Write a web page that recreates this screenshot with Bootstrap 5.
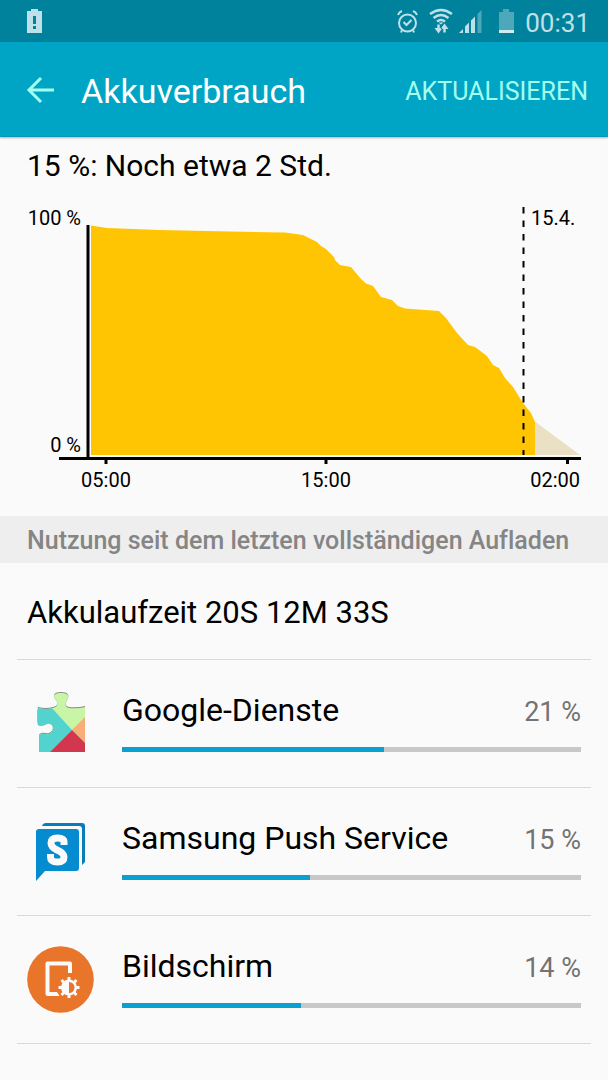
<!DOCTYPE html>
<html lang="de">
<head>
<meta charset="utf-8">
<meta name="viewport" content="width=device-width, initial-scale=1">
<title>Akkuverbrauch</title>
<link href="https://cdn.jsdelivr.net/npm/bootstrap@5.3.0/dist/css/bootstrap.min.css" rel="stylesheet">
<style>
  body { font-family: Roboto, "Liberation Sans", sans-serif; font-variant-ligatures: none; background: #fafafa; color: #000; }
  .status { background: #00829d; height: 42px; padding: 0 18px 0 27px; color: #bfe0e7; }
  .clock { font-size: 26px; line-height: 32px; margin: 3px 0 0 8px; }
  .appbar { background: #00a5c6; height: 95px; padding: 2px 20px 0 26px; border-bottom: 1px solid #0898b4; box-shadow: 0 1px 2px rgba(0,0,0,.3); }
  .back { line-height: 0; color: #a5fff0; }
  .title { font-size: 34px; line-height: 40px; margin: 2px 0 0 26px; }
  .refresh { font-size: 25px; line-height: 32px; color: #a5fff0; margin-top: 3px; }
  .remaining { font-size: 30px; line-height: 40px; padding: 9px 27px 10px; }
  .chart text { font-size: 20px; }
  .section-title { font-size: 25px; line-height: 32px; font-weight: 500; color: #858585; background: #eee; padding: 9px 27px 6px; margin-top: 16px; }
  .usage { padding: 0 17px; }
  .usage > * { border-bottom: 1px solid #d8d8d8; }
  .runtime { font-size: 31px; line-height: 40px; padding: 30px 10px 26px; }
  .usage-row { height: 128px; padding: 0 10px; }
  .app-icon { width: 67px; height: 67px; margin-right: 28px; }
  .entry { padding-bottom: 6px; }
  .app-name { font-size: 32px; line-height: 40px; }
  .share { font-size: 27px; line-height: 36px; color: #737373; }
  .meter { height: 5px; background: #c8c8c8; border-radius: 0; margin-top: 17px; }
  .meter .progress-bar { background: #0aa1d0; }
</style>
</head>
<body>
<div class="status d-flex align-items-center">
  <svg width="16" height="24" viewBox="0 0 16 24" fill="currentColor" aria-label="Akku schwach"><path fill-rule="evenodd" d="M4 0H11V2H15V24H0V2H4ZM6 7V15H9V7ZM6 17V20H9V17Z"/></svg>
  <div class="d-flex align-items-center ms-auto">
    <svg width="120" height="26" viewBox="397 8 120 26" fill="none" stroke="currentColor" aria-hidden="true">
      <circle cx="407.500" cy="23" r="8.500" stroke-width="2"/>
      <path d="M403.500 22l3 3 5-5M398 15q1-3 4-4M417 15q-1-3-4-4M402 30l-1 2.500M413 30l1 2.500" stroke-width="2"/>
      <path d="M430 14q11-8 22 0M433.500 18q7.500-6 15 0M437 21.500q4-3 8 0" stroke-width="2.500"/>
      <path d="M438.500 22.500h5l-2.500 2z" fill="currentColor" stroke="none"/>
      <path d="M438.500 24.500v5M444.500 27.500v5" stroke-width="2.500"/>
      <path d="M434.500 28h8l-4 5.500zM440.500 29h8l-4-5.500z" fill="currentColor" stroke="none"/>
      <path d="M459 33l4-4v4zM465 33V26.500l4-4V33zM471 33V20.500l4-4V33z" fill="currentColor" stroke="none"/>
      <path d="M477.500 33V14l4-4V33z" fill="#4da8ba" stroke="none"/>
      <path d="M499 12h4V9h6v3h5v18H499z" fill="#4da8ba" stroke="none"/>
      <path d="M499 30h15v3H499z" fill="#d2ebef" stroke="none"/>
    </svg>
    <span class="clock">00:31</span>
  </div>
</div>
<header class="appbar d-flex align-items-center">
  <button class="back btn p-0 border-0" type="button" aria-label="Zurück">
    <svg width="29" height="28" viewBox="0 0 29 28" fill="none" stroke="currentColor" stroke-width="3" aria-hidden="true"><path d="M28 14H3M15 2L3 14L15 26"/></svg>
  </button>
  <h1 class="title fw-normal text-white mb-0">Akkuverbrauch</h1>
  <button class="refresh btn p-0 border-0 ms-auto" type="button">AKTUALISIEREN</button>
</header>
<main>
  <div class="remaining">15 %: Noch etwa 2 Std.</div>
  <svg class="chart d-block w-100" viewBox="0 196 608 304" role="img" aria-label="Akkustand im Zeitverlauf">
    <path fill="#ffc503" d="M91 225.500L107 228L160 230L230 231.500L285 232.500L303 235L317 242L321 246L326 249L334 257L335 260L340 265L351 267L361 279L366 283.500L373 286L381 297L392 300L398 306L405 308.500L439 311L446 318L457 333L468 345L475 347L487 356L493 365L499 368L505 378L513 387L523 403L531 413L535 422V455H91Z"/>
    <path fill="#eae1c5" d="M535 421.500L580 455H535Z"/>
    <path stroke="#000" stroke-width="3" d="M88 225V458M59 458.500H581M106 459V464M326 459V464M567.500 459V464" fill="none"/>
    <path stroke="#000" stroke-width="2" stroke-dasharray="6.500 7" d="M523.500 207V455"/>
    <g text-anchor="end"><text x="81" y="225">100 %</text><text x="81" y="452">0 %</text><text x="580" y="487">02:00</text></g>
    <text x="531" y="225">15.4.</text>
    <g text-anchor="middle"><text x="106" y="487">05:00</text><text x="326" y="487">15:00</text></g>
  </svg>
  <h2 class="section-title mb-0">Nutzung seit dem letzten vollständigen Aufladen</h2>
  <div class="usage">
    <div class="runtime">Akkulaufzeit 20S 12M 33S</div>
    <div class="usage-row d-flex align-items-center">
      <svg class="app-icon flex-shrink-0" viewBox="27 690 67 67" aria-hidden="true">
        <defs><path id="piece" d="M38 707Q46 709 53 707C58 706 58 703 56 700C52 695 54 692 61 692C68 692 70 695 67 700C65 704 65 706 69 707Q77 708 85 706V752H39V735C42 731 45 734 49 733C54 731 54 725 50 724C46 723 43 728 38 725Q36 716 38 707Z"/><clipPath id="cut"><use href="#piece"/></clipPath></defs>
        <use href="#piece" fill="#858b82"/>
        <g clip-path="url(#cut)"><g transform="translate(0 1)">
          <use href="#piece" fill="#c9f5a7"/>
          <path fill="#52d3ce" d="M35 706H51L72 729L49 752H35Z" clip-path="url(#cut)"/>
          <path fill="#f9ad77" d="M86 715V743L72 729Z"/>
          <path fill="#d13850" d="M72 729L86 743V751H50Z"/>
        </g></g>
      </svg>
      <div class="entry flex-grow-1">
        <div class="d-flex justify-content-between align-items-end"><span class="app-name">Google-Dienste</span><span class="share">21 %</span></div>
        <div class="meter progress" role="progressbar" aria-label="Google-Dienste" aria-valuenow="21"><div class="progress-bar" style="width:57%"></div></div>
      </div>
    </div>
    <div class="usage-row d-flex align-items-center">
      <svg class="app-icon flex-shrink-0" viewBox="27 818 67 67" aria-hidden="true">
        <path fill="#087dbd" d="M42 826Q43 823 46 823H82Q85 823 85 826V862L82 865V829Q82 826 79 826Z"/>
        <path fill="#058bd0" d="M39 829H76Q79 829 79 832V868Q79 871 76 871H45L36 881V832Q36 829 39 829Z"/>
        <path fill="none" stroke="#fafafa" stroke-width="7" d="M64 845V842Q64 838 57.500 838Q51 838 51 843Q51 847 57 850Q64 853 64 857Q64 862 57.500 862Q50.500 862 50.500 857V854"/>
      </svg>
      <div class="entry flex-grow-1">
        <div class="d-flex justify-content-between align-items-end"><span class="app-name">Samsung Push Service</span><span class="share">15 %</span></div>
        <div class="meter progress" role="progressbar" aria-label="Samsung Push Service" aria-valuenow="15"><div class="progress-bar" style="width:41%"></div></div>
      </div>
    </div>
    <div class="usage-row d-flex align-items-center">
      <svg class="app-icon flex-shrink-0" viewBox="27 946 67 67" aria-hidden="true">
        <circle cx="60.500" cy="979.500" r="33.300" fill="#e8752a"/>
        <path fill="none" stroke="#fafafa" stroke-width="4" stroke-linejoin="round" d="M70 973V963.500H47.500V994H56.500"/>
        <path fill="#fafafa" d="M56 992H57L59.500 996H56Z"/>
        <path stroke="#fafafa" stroke-width="3" d="M69 977V998M58.500 987.500H79.500M61.500 980L76.500 995M76.500 980L61.500 995"/>
        <circle cx="69" cy="987.500" r="8" fill="#fafafa"/>
        <path fill="#e8752a" d="M69 982A5.500 5.500 0 0 1 69 993Z"/>
      </svg>
      <div class="entry flex-grow-1">
        <div class="d-flex justify-content-between align-items-end"><span class="app-name">Bildschirm</span><span class="share">14 %</span></div>
        <div class="meter progress" role="progressbar" aria-label="Bildschirm" aria-valuenow="14"><div class="progress-bar" style="width:39%"></div></div>
      </div>
    </div>
  </div>
</main>
<script src="https://cdn.jsdelivr.net/npm/bootstrap@5.3.0/dist/js/bootstrap.bundle.min.js"></script>
</body>
</html>
